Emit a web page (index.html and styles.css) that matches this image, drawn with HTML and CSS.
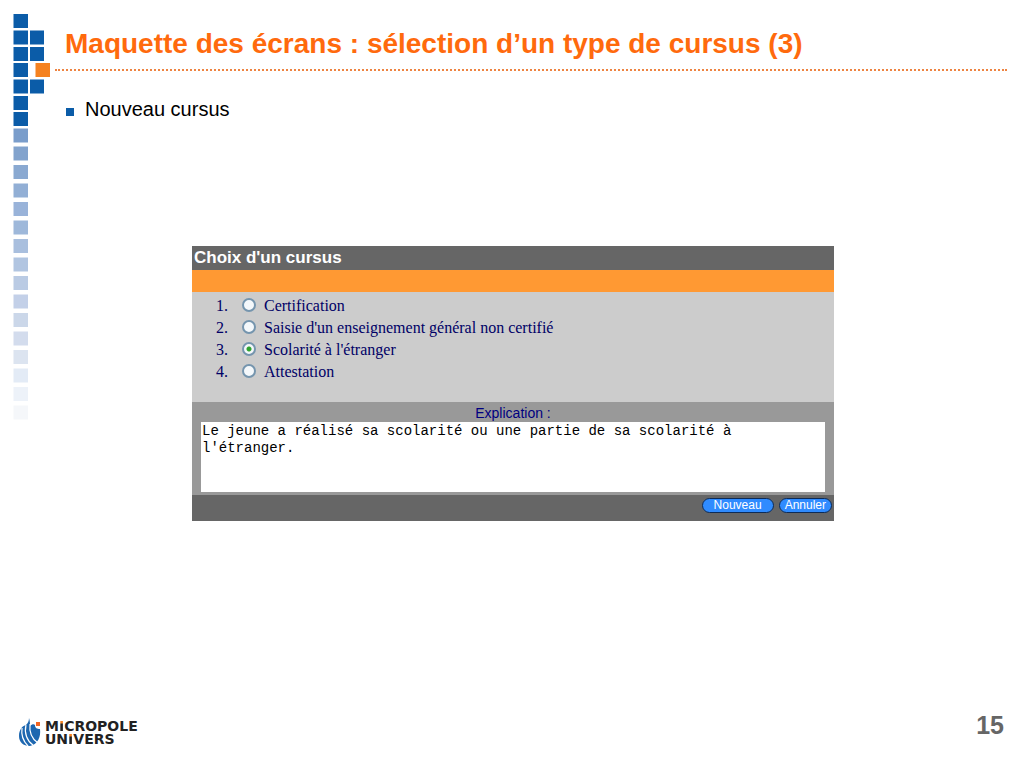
FILE: index.html
```html
<!DOCTYPE html>
<html lang="fr">
<head>
    <meta charset="UTF-8">
    <meta name="viewport" content="width=device-width, initial-scale=1.0">
    <title>Maquette des écrans</title>
    <link rel="stylesheet" href="styles.css">
</head>
<body>
    <div class="slide">
        <svg class="squares" width="55" height="425" viewBox="0 0 55 425" aria-hidden="true">
            <g fill="#0b5ca8">
                <rect x="13.5" y="14" width="14.5" height="14"/>
                <rect x="13.5" y="30.5" width="14.5" height="14"/>
                <rect x="30" y="30.5" width="14" height="14"/>
                <rect x="13.5" y="47" width="14.5" height="14"/>
                <rect x="30" y="47" width="14" height="14"/>
                <rect x="13.5" y="63" width="14.5" height="14"/>
                <rect x="13.5" y="79.5" width="14.5" height="14"/>
                <rect x="30" y="79.5" width="14" height="14"/>
                <rect x="13.5" y="96" width="14.5" height="14"/>
                <rect x="13.5" y="112" width="14.5" height="14"/>
            </g>
            <rect x="35.5" y="63" width="14.5" height="14" fill="#f58220"/>
            <!-- fading column -->
            <rect x="13.5" y="128.5" width="14.5" height="14" fill="#7a9dcb"/>
            <rect x="13.5" y="146.5" width="14.5" height="14" fill="#82a3cd"/>
            <rect x="13.5" y="165" width="14.5" height="14" fill="#8aa9d1"/>
            <rect x="13.5" y="183.5" width="14.5" height="14" fill="#92afd5"/>
            <rect x="13.5" y="202" width="14.5" height="14" fill="#99b3d9"/>
            <rect x="13.5" y="220.5" width="14.5" height="14" fill="#9eb8da"/>
            <rect x="13.5" y="239" width="14.5" height="14" fill="#a9bfde"/>
            <rect x="13.5" y="257.5" width="14.5" height="14" fill="#b1c5e1"/>
            <rect x="13.5" y="276" width="14.5" height="14" fill="#bacbe4"/>
            <rect x="13.5" y="294.5" width="14.5" height="14" fill="#c3d0e8"/>
            <rect x="13.5" y="313" width="14.5" height="14" fill="#cbd7e9"/>
            <rect x="13.5" y="331.5" width="14.5" height="14" fill="#d3dced"/>
            <rect x="13.5" y="350" width="14.5" height="14" fill="#dce4f0"/>
            <rect x="13.5" y="368.5" width="14.5" height="14" fill="#e3ebf6"/>
            <rect x="13.5" y="387" width="14.5" height="14" fill="#edf2f9"/>
            <rect x="13.5" y="405.5" width="14.5" height="14" fill="#f5f7fa"/>
        </svg>

        <main class="content">
            <h1>Maquette des écrans : sélection d’un type de cursus (3)</h1>
            <ul class="points">
                <li>Nouveau cursus</li>
            </ul>

            <form class="dialog">
                <h2>Choix d'un cursus</h2>
                <div class="band"></div>
                <ol class="choices">
                    <li><input type="radio" name="cursus" id="certification"><label for="certification">Certification</label></li>
                    <li><input type="radio" name="cursus" id="saisie"><label for="saisie">Saisie d'un enseignement général non certifié</label></li>
                    <li><input type="radio" name="cursus" id="scolarite" checked><label for="scolarite">Scolarité à l'étranger</label></li>
                    <li><input type="radio" name="cursus" id="attestation"><label for="attestation">Attestation</label></li>
                </ol>
                <div class="explanation">
                    <label for="explication">Explication :</label>
                    <textarea id="explication" spellcheck="false">Le jeune a réalisé sa scolarité ou une partie de sa scolarité à l'étranger.</textarea>
                </div>
                <div class="actions">
                    <button type="button" class="btn btn-wide">Nouveau</button>
                    <button type="button" class="btn">Annuler</button>
                </div>
            </form>
        </main>

        <footer class="footer">
            <div class="logo">
                <svg width="24" height="32" viewBox="0 0 24 32" aria-hidden="true">
                    <path d="M11 1c1 3 1 6 1 8 2-2 4-2 5-1 0 3 2 4 5 4 1 8-2 15-10 17C5 29 1 25 1 19 1 13 4 9 8 8c2-2 3-4 3-7z" fill="#1d67b0"/>
                    <path d="M4 11c-1 7 1 13 6 18M8 8c-2 8 1 16 7 20M12 7c-1 9 2 15 8 19" fill="none" stroke="#fff" stroke-width="1.2"/>
                    <rect x="18" y="5" width="4" height="4" fill="#f26522"/>
                </svg>
                <span class="logo-name">M<span class="accent">I</span>CROPOLE<br>UN<span class="accent">I</span>VERS</span>
            </div>
            <span class="page-number">15</span>
        </footer>
    </div>
</body>
</html>
```

FILE: styles.css
```css
* {
    box-sizing: border-box;
}

body {
    margin: 0;
    background-color: #fff;
    color: #000;
    font-family: "Liberation Sans", Arial, sans-serif;
}

.slide {
    display: grid;
    grid-template-columns: 55px 1fr;
    grid-template-rows: 1fr auto;
    min-height: 100vh;
}

.squares {
    display: block;
}

.content {
    padding: 28px 17px 0 0;
}

h1 {
    margin: 0;
    padding: 0 0 9px 10px;
    border-bottom: 2px dotted #ee8442;
    color: #ff6a0d;
    font-size: 28px;
    line-height: 32px;
}

.points {
    list-style: none;
    margin: 0;
    padding: 26px 0 0 11px;
    font-size: 20px;
    line-height: 24px;
}

.points li {
    display: flex;
    align-items: center;
    gap: 11px;
}

.points li::before {
    content: "";
    width: 8px;
    height: 8px;
    margin-top: 5px;
    background-color: #0b5ca8;
}

.dialog {
    max-width: 642px;
    margin: 125px auto 0 137px;
    background-color: #ccc;
}

h2 {
    margin: 0;
    padding: 0 2px;
    background-color: #666;
    color: #fff;
    font-size: 17px;
    line-height: 24px;
}

.band {
    height: 22px;
    background-color: #f93;
}

.choices {
    margin: 0;
    padding: 3px 0 19px 40px;
    color: #000066;
    font-family: "Liberation Serif", "Times New Roman", serif;
    font-size: 16px;
    line-height: 22px;
}

.choices li {
    padding-left: 10px;
}

.choices input {
    appearance: none;
    width: 14px;
    height: 14px;
    margin: 0 8px 0 0;
    border: 2px solid #7595ae;
    border-radius: 50%;
    background-color: #f4f8fb;
    vertical-align: -1px;
}

.choices input:checked {
    background: radial-gradient(circle, #2fa32f 0 2px, #f4f8fb 3px);
}

.explanation {
    padding: 2px 9px 3px;
    background-color: #999;
}

.explanation label {
    display: block;
    color: #000080;
    font-size: 14px;
    line-height: 18px;
    text-align: center;
}

.explanation textarea {
    display: block;
    width: 100%;
    height: 70px;
    padding: 1px;
    border: 0;
    resize: none;
    background-color: #fff;
    color: #000;
    font-family: "Liberation Mono", "Courier New", monospace;
    font-size: 14px;
    line-height: 17px;
}

.actions {
    display: flex;
    justify-content: flex-end;
    gap: 5px;
    padding: 3px 2px 8px;
    background-color: #666;
}

.btn {
    height: 15px;
    padding: 0 5px;
    border: 1px solid #0d2b57;
    border-radius: 8px;
    background-color: #2f8bff;
    color: #fff;
    font-family: inherit;
    font-size: 12px;
    line-height: 13px;
}

.btn-wide {
    padding: 0 11px;
}

.footer {
    grid-column: 1 / -1;
    display: flex;
    justify-content: space-between;
    align-items: flex-end;
    padding: 0 20px 19px 18px;
}

.logo {
    display: flex;
    align-items: center;
    gap: 3px;
}

.logo-name {
    color: #222;
    font-family: "DejaVu Sans", Verdana, sans-serif;
    font-size: 14px;
    font-weight: bold;
    line-height: 13px;
}

.accent {
    background: linear-gradient(#f58220 5px, #222 6px);
    background-clip: text;
    color: transparent;
}

.page-number {
    color: #666;
    font-size: 25px;
    font-weight: bold;
    line-height: 48px;
}
```
